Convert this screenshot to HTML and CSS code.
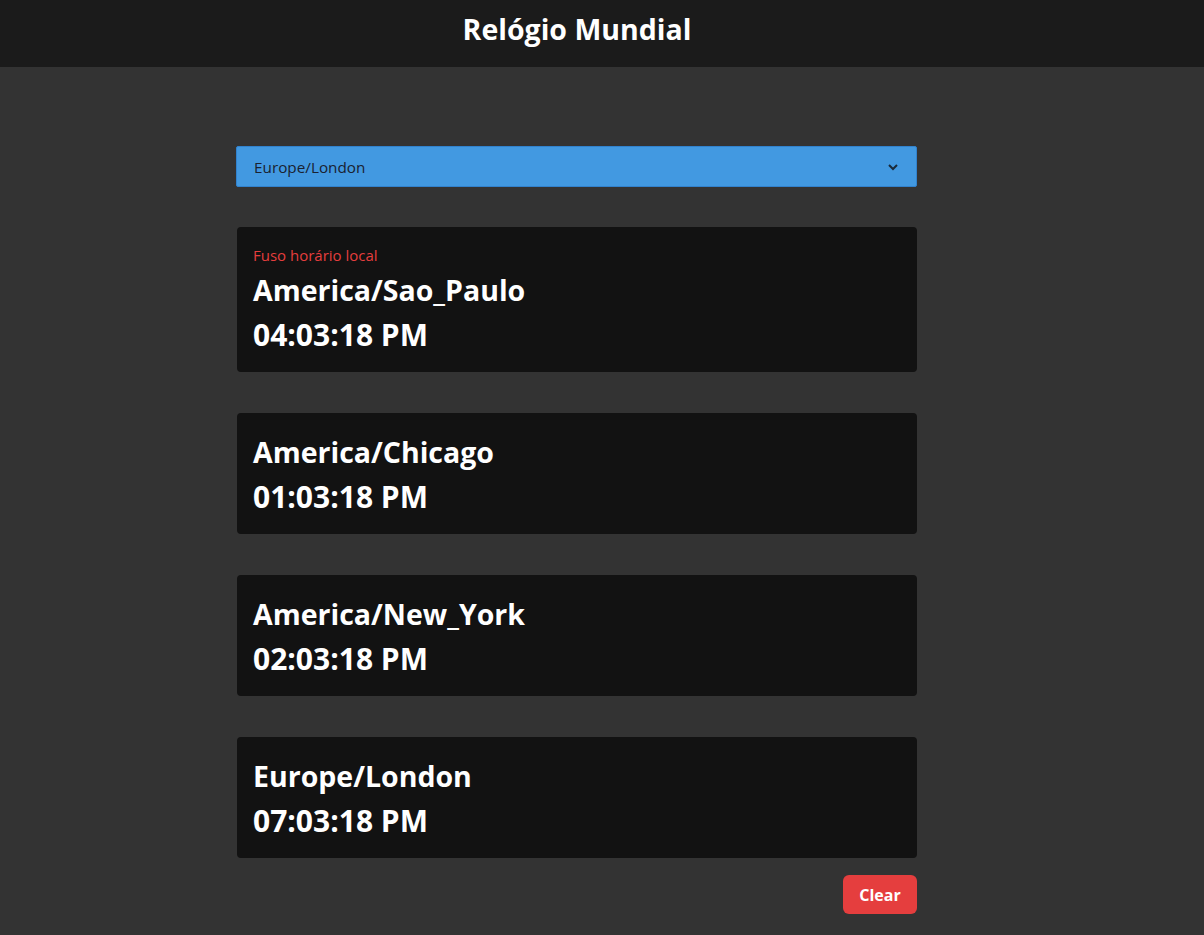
FILE: index.html
```html
<!DOCTYPE html>
<html lang="pt">
<head>
<meta charset="utf-8">
<title>Relógio Mundial</title>
<link rel="stylesheet" href="styles.css">
</head>
<body>
<header class="topbar">
  <h1 class="title">Relógio Mundial</h1>
</header>
<main class="content">
  <div class="select">
    <span class="select-value">Europe/London</span>
    <svg class="chevron" width="12" height="8" viewBox="0 0 12 8"><path d="M2 2 L6 6 L10 2" fill="none" stroke="#1a2a3a" stroke-width="2"/></svg>
  </div>
  <div class="card card-local">
    <div class="local">Fuso horário local</div>
    <div class="zone">America/Sao_Paulo</div>
    <div class="time">04:03:18 PM</div>
  </div>
  <div class="card">
    <div class="zone">America/Chicago</div>
    <div class="time">01:03:18 PM</div>
  </div>
  <div class="card">
    <div class="zone">America/New_York</div>
    <div class="time">02:03:18 PM</div>
  </div>
  <div class="card card-last">
    <div class="zone">Europe/London</div>
    <div class="time">07:03:18 PM</div>
  </div>
  <div class="actions">
    <button class="clear">Clear</button>
  </div>
</main>
</body>
</html>
```
FILE: styles.css
```css
html, body {
  margin: 0;
  padding: 0;
}
body {
  background: #333333;
  font-family: "Open Sans", Lato, sans-serif;
  color: #fff;
  min-height: 935px;
}
.topbar {
  background: #1b1b1b;
  height: 67px;
  box-sizing: border-box;
  padding-bottom: 9px;
  display: flex;
  align-items: center;
  justify-content: center;
  width: 1154px;
  margin-right: 50px;
  box-shadow: 50px 0 0 #1b1b1b;
}
.title {
  margin: 0;
  font-size: 28.5px;
  font-weight: 700;
  color: #fff;
}
.content {
  width: 681px;
  margin-left: 236px;
  padding-top: 79px;
  display: flex;
  flex-direction: column;
}
.select {
  height: 41px;
  box-sizing: border-box;
  background: #4299e1;
  border: 1px solid #3182ce;
  border-radius: 2px;
  display: flex;
  align-items: center;
  justify-content: space-between;
  padding: 1px 17px 0 17px;
  margin-bottom: 40px;
}
.select-value {
  color: #1a2230;
  font-size: 15.3px;
}
.card {
  background: #121212;
  border-radius: 4px;
  height: 121px;
  box-sizing: border-box;
  padding: 17px 16px 16px;
  margin-left: 1px;
  margin-bottom: 41px;
}
.card-local {
  height: 145px;
}
.card-last {
  margin-bottom: 17px;
}
.local {
  color: #e53e3e;
  font-size: 15px;
  line-height: 24px;
  height: 24px;
  margin-top: -1px;
  margin-bottom: 1px;
}
.zone, .time {
  font-weight: 700;
  line-height: 44px;
  height: 44px;
}
.zone {
  font-size: 28.5px;
}
.time {
  font-size: 30px;
  padding-top: 1px;
}
.actions {
  display: flex;
  justify-content: flex-end;
}
.clear {
  background: #e53e3e;
  color: #fff;
  border: none;
  border-radius: 6px;
  width: 74px;
  height: 39px;
  font-family: inherit;
  font-size: 16px;
  font-weight: 700;
}
```
